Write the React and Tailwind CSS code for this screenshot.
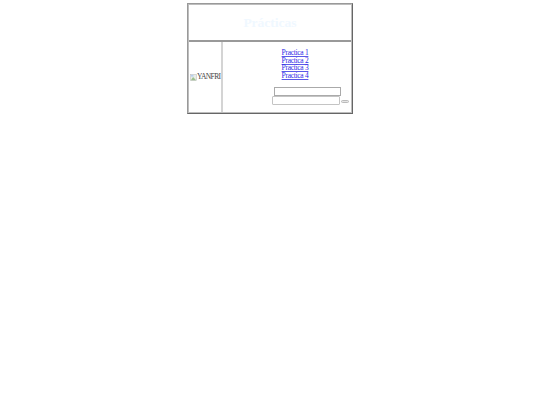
export default function App() {
  const serif = "font-['Liberation_Serif','Times_New_Roman',serif]";
  const linkClass = "underline decoration-[#5a5ae8] text-[#2a2ae6]";
  return (
    <div className={`w-[540px] h-[405px] bg-white pt-[3px] ${serif}`}>
      <div className="ml-[187px] w-[166px] h-[111px] border-t border-l border-r border-b border-t-[#999] border-l-[#999] border-r-[#666] border-b-[#666]">
        <div className="h-full border border-[#bdbdbd] flex flex-col">
          <div className="h-[37px] shrink-0 border-b-2 border-b-[#999] flex items-center justify-center pt-px">
            <span className="text-[13.5px] font-bold text-[#f0f8ff]">Prácticas</span>
          </div>
          <div className="flex-1 flex min-h-0">
            <div className="w-[34px] shrink-0 border-r-2 border-r-[#d4d4d4] flex items-center overflow-hidden">
              <svg width="7" height="7" viewBox="0 0 8 8" className="shrink-0 ml-px">
                <rect x="0.5" y="0.5" width="7" height="7" fill="#e8eee8" stroke="#bbb" strokeWidth="0.6" />
                <path d="M1 7 L3.5 3.5 L7 7 Z" fill="#9cc08e" />
                <rect x="1" y="1" width="3" height="2" fill="#b8d0ee" />
              </svg>
              <span className="text-[7.5px] tracking-[-0.6px] leading-none text-[#444] whitespace-nowrap">YANFRI</span>
            </div>
            <div className="flex-1 flex flex-col items-center pt-[7px]">
              <div className="flex flex-col items-center text-[7.5px] tracking-[-0.3px] leading-[7.5px] ml-[16px]">
                <a href="#" className={linkClass}>Practica 1</a>
                <a href="#" className={linkClass}>Practica 2</a>
                <a href="#" className={linkClass}>Practica 3</a>
                <a href="#" className={linkClass}>Practica 4</a>
              </div>
              <div className="mt-[8px] w-[67px] h-[9px] border border-[#aaa] bg-white ml-[41px]" />
              <div className="flex items-start self-start ml-[49px]">
                <div className="w-[68px] h-[9px] border border-[#c4c4c4] rounded-[1px] bg-white" />
                <div className="ml-px mt-[4px] w-[8px] h-[3px] border border-[#bbb] rounded-full bg-[#e5e5e5]" />
              </div>
            </div>
          </div>
        </div>
      </div>
    </div>
  );
}
